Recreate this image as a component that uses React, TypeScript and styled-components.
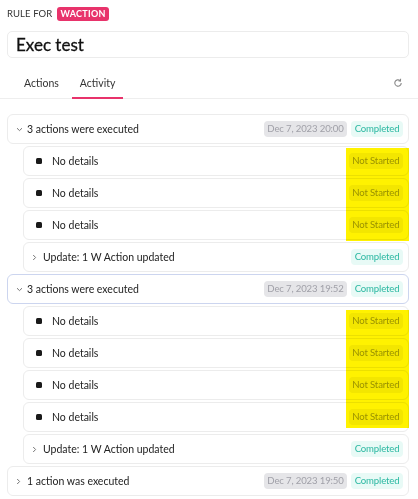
import React from 'react'
import styled, { createGlobalStyle } from 'styled-components'

const GlobalStyle = createGlobalStyle`
    body {
        margin: 0;
        background: #fff;
        font-family: Lato, 'Noto Sans', sans-serif;
        color: #222;
    }
`

const Page = styled.div`
    padding: 7px 9px 0 7px;
    display: flex;
    flex-direction: column;
`

const RuleFor = styled.div`
    display: flex;
    align-items: center;
    gap: 5px;
    height: 14px;
    line-height: 14px;
    font-size: 9.5px;
    letter-spacing: 0.1px;
    color: #333;
`

const Badge = styled.span`
    background: #e8336b;
    color: #fff;
    font-weight: 700;
    font-size: 9px;
    letter-spacing: 0.3px;
    padding: 0 3px;
    height: 14px;
    line-height: 14px;
    border-radius: 3px;
`

const TitleBox = styled.div`
    margin-top: 10px;
    height: 25px;
    border: 1px solid #ececec;
    border-radius: 5px;
    display: flex;
    align-items: center;
    padding-left: 8px;
    font-size: 17px;
    line-height: 20px;
    color: #111;
    -webkit-text-stroke: 0.3px #111;
`

const TabBar = styled.div`
    margin: 11px -9px 0 -7px;
    height: 29px;
    border-bottom: 1px solid #eee;
    display: flex;
    align-items: stretch;
    padding: 0 15px 0 16px;
`

const Tab = styled.div<{ $active?: boolean }>`
    padding: 0 8px;
    margin-right: 5px;
    display: flex;
    align-items: center;
    font-size: 10.5px;
    line-height: 14px;
    color: #333;
    border-bottom: 2px solid ${p => (p.$active ? '#e8336b' : 'transparent')};
    margin-bottom: -1px;
`

const Spacer = styled.div`
    flex: 1;
`

const Refresh = styled.div`
    display: flex;
    align-items: center;
    color: #888;
    padding-bottom: 2px;
`

const List = styled.div`
    margin-top: 15px;
    display: flex;
    flex-direction: column;
    gap: 2px;
`

const Row = styled.div<{ $indent?: boolean; $focused?: boolean }>`
    height: 28px;
    margin-left: ${p => (p.$indent ? '16px' : '0')};
    border: 1px solid ${p => (p.$focused ? '#ccd5ef' : '#ececec')};
    border-radius: 6px;
    display: flex;
    align-items: center;
    padding: 0 5px 0 8px;
    font-size: 10.5px;
    line-height: 14px;
    color: #222;
`

const Chevron = styled.span`
    width: 11px;
    display: flex;
    align-items: center;
    color: #777;
`

const Bullet = styled.span`
    width: 6px;
    height: 6px;
    border-radius: 1.5px;
    background: #1a1a1a;
    margin: 0 10px 0 4px;
`

const Pill = styled.span<{ $kind: 'date' | 'done' | 'idle' }>`
    height: 16px;
    line-height: 16px;
    padding: 0 3.5px;
    border-radius: 4px;
    margin-left: 4px;
    font-size: 9.6px;
    letter-spacing: -0.15px;
    background: ${p => (p.$kind === 'date' ? '#e5e5e8' : p.$kind === 'done' ? '#e8faf6' : '#f3f3f3')};
    color: ${p => (p.$kind === 'date' ? '#a0a0a8' : p.$kind === 'done' ? '#2bb8a2' : '#9a9a9a')};
`

const Highlight = styled.div<{ $top: number; $bottom: number }>`
    position: relative;
    display: flex;
    flex-direction: column;
    gap: 2px;
    &::after {
        content: '';
        position: absolute;
        right: 0;
        width: 63px;
        top: ${p => p.$top}px;
        bottom: ${p => p.$bottom}px;
        background: #fff200;
        mix-blend-mode: multiply;
        pointer-events: none;
    }
`

const Down = () => (
    <svg width="7" height="5" viewBox="0 0 7 5">
        <path d="M1 1.2 L3.5 3.6 L6 1.2" fill="none" stroke="currentColor" strokeWidth="1" />
    </svg>
)

const Right = () => (
    <svg width="5" height="7" viewBox="0 0 5 7">
        <path d="M1.2 1 L3.6 3.5 L1.2 6" fill="none" stroke="currentColor" strokeWidth="1" />
    </svg>
)

const NoDetails = () => (
    <Row $indent>
        <Bullet />
        No details
        <Spacer />
        <Pill $kind="idle">Not Started</Pill>
    </Row>
)

const UpdateRow = () => (
    <Row $indent>
        <Chevron>
            <Right />
        </Chevron>
        Update: 1 W Action updated
        <Spacer />
        <Pill $kind="done">Completed</Pill>
    </Row>
)

const groups = [
    { title: '3 actions were executed', date: 'Dec 7, 2023 20:00', open: true, count: 3, focused: false, hl: [2, -1] },
    { title: '3 actions were executed', date: 'Dec 7, 2023 19:52', open: true, count: 4, focused: true, hl: [4, 4] },
    { title: '1 action was executed', date: 'Dec 7, 2023 19:50', open: false, count: 0, focused: false, hl: [0, 0] },
]

const App: React.FC = () => {
    return (
        <Page>
            <GlobalStyle />
            <RuleFor>
                RULE FOR <Badge>WACTION</Badge>
            </RuleFor>
            <TitleBox>Exec test</TitleBox>
            <TabBar>
                <Tab>Actions</Tab>
                <Tab $active>Activity</Tab>
                <Spacer />
                <Refresh>
                    <svg width="10" height="10" viewBox="0 0 10 10">
                        <path
                            d="M8.2 5 A3.2 3.2 0 1 1 7 2.5"
                            fill="none"
                            stroke="currentColor"
                            strokeWidth="1.1"
                        />
                        <path d="M7.6 0.8 L7.4 3 L5.3 2.7" fill="none" stroke="currentColor" strokeWidth="1.1" />
                    </svg>
                </Refresh>
            </TabBar>
            <List>
                {groups.map((g, i) => (
                    <React.Fragment key={i}>
                        <Row $focused={g.focused}>
                            <Chevron>{g.open ? <Down /> : <Right />}</Chevron>
                            {g.title}
                            <Spacer />
                            <Pill $kind="date">{g.date}</Pill>
                            <Pill $kind="done">Completed</Pill>
                        </Row>
                        {g.open && (
                            <>
                                <Highlight $top={g.hl[0]} $bottom={g.hl[1]}>
                                    {Array.from({ length: g.count }).map((_, j) => (
                                        <NoDetails key={j} />
                                    ))}
                                </Highlight>
                                <UpdateRow />
                            </>
                        )}
                    </React.Fragment>
                ))}
            </List>
        </Page>
    )
}

export default App
